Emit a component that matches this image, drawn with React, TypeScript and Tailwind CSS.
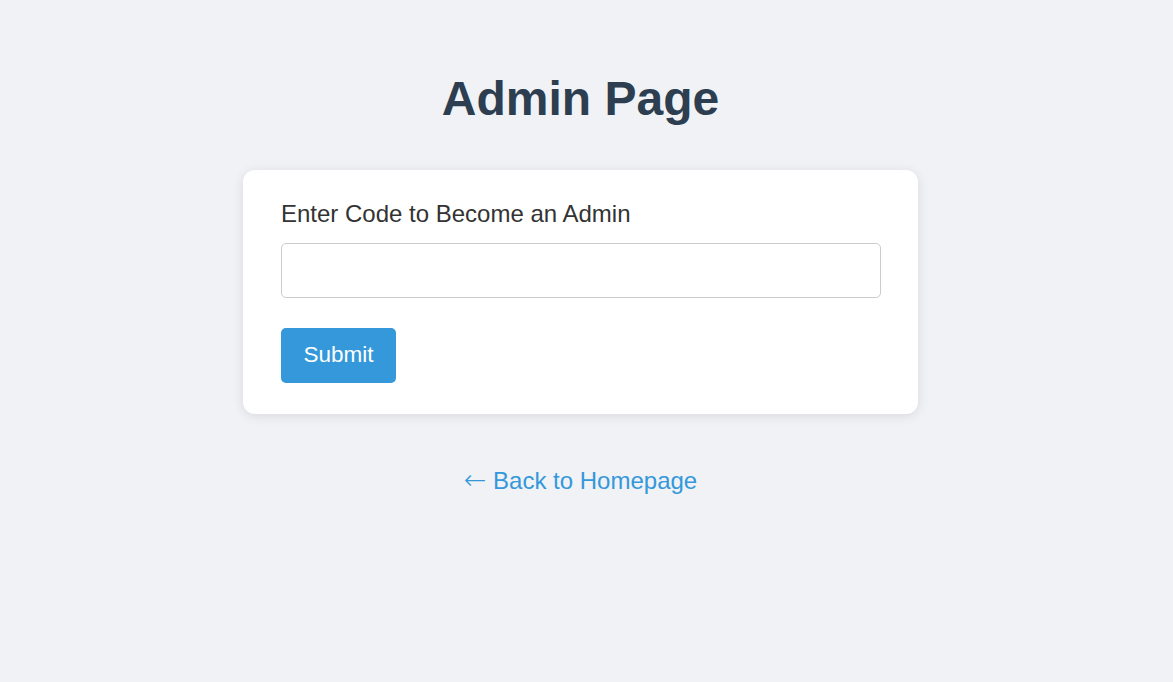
import React, { useState } from 'react';

export default function App() {
    const [code, setCode] = useState('');

    return (
        <div className="min-h-screen bg-[#f0f2f5] font-['Liberation_Sans',Arial,sans-serif]">
            <div className="flex flex-col items-center pt-[63px] pr-[12px]">
                {/* Titre */}
                <h1 className="text-[48px] font-bold leading-normal text-[#2c3e50]">Admin Page</h1>

                {/* Carte du formulaire */}
                <form
                    onSubmit={(e) => e.preventDefault()}
                    className="mt-[35px] w-[675px] rounded-xl bg-white pl-[38px] pr-[37px] pt-[26px] pb-[31px] shadow-[0_2px_12px_rgba(0,0,0,0.1)]"
                >
                    <label htmlFor="code" className="block text-[24px] leading-normal text-[#333]">
                        Enter Code to Become an Admin
                    </label>
                    <input
                        id="code"
                        type="text"
                        value={code}
                        onChange={(e) => setCode(e.target.value)}
                        className="mt-[11px] block h-[55px] w-full rounded-[5px] border border-[#ccc] bg-white px-3 text-[20px] outline-none"
                    />
                    <button
                        type="submit"
                        className="mt-[30px] h-[55px] rounded-[5px] bg-[#3498db] px-[22.5px] text-[22.5px] leading-none text-white"
                    >
                        Submit
                    </button>
                </form>

                {/* Lien retour */}
                <a href="#" className="mt-[46px] text-[24px] leading-normal text-[#3498db]">
                    <span className="font-['DejaVu_Sans',sans-serif] text-[27px] font-extralight">←</span> Back to Homepage
                </a>
            </div>
        </div>
    );
}
